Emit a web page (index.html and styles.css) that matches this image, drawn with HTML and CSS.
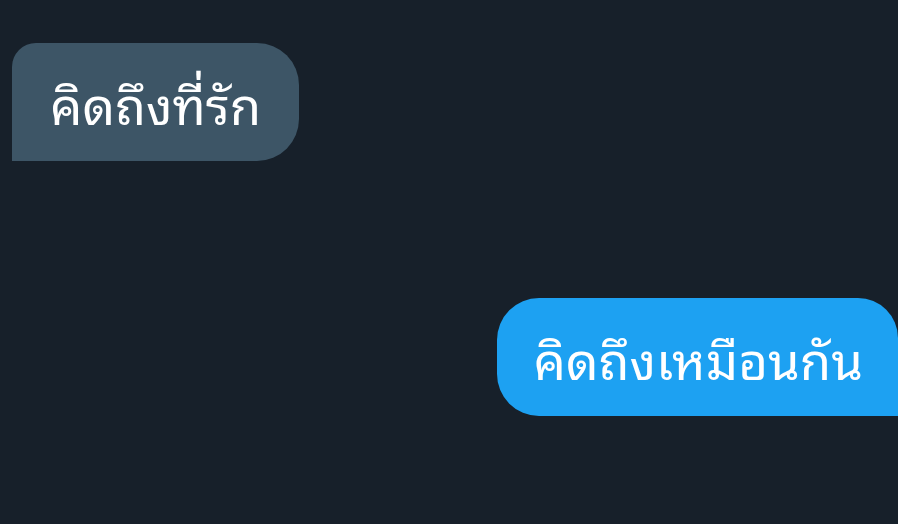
FILE: index.html
```html
<!DOCTYPE html>
<html lang="th">
<head>
<meta charset="utf-8">
<link rel="stylesheet" href="styles.css">
</head>
<body>
<main class="chat">
  <div class="bubble bubble-in">คิดถึงที่รัก</div>
  <div class="bubble bubble-out">คิดถึงเหมือนกัน</div>
</main>
</body>
</html>
```
FILE: styles.css
```css
html, body {
  margin: 0;
  padding: 0;
  background: #17202a;
  width: 898px;
  height: 524px;
  overflow: hidden;
}
.chat {
  display: flex;
  flex-direction: column;
  padding: 43px 0 0 12px;
}
.bubble {
  box-sizing: border-box;
  height: 118px;
  display: flex;
  align-items: center;
  padding: 0 38px;
  color: #ffffff;
  font-family: "Noto Sans Thai Looped", "Noto Sans Thai", sans-serif;
  font-size: 51px;
  line-height: 1;
  white-space: nowrap;
}
.bubble-in {
  align-self: flex-start;
  background: #3d5566;
  border-radius: 24px 42px 42px 0;
}
.bubble-out {
  align-self: flex-end;
  margin-top: 137px;
  padding: 0 35px 0 37px;
  background: #1da1f2;
  border-radius: 42px 40px 0 42px;
}
```
